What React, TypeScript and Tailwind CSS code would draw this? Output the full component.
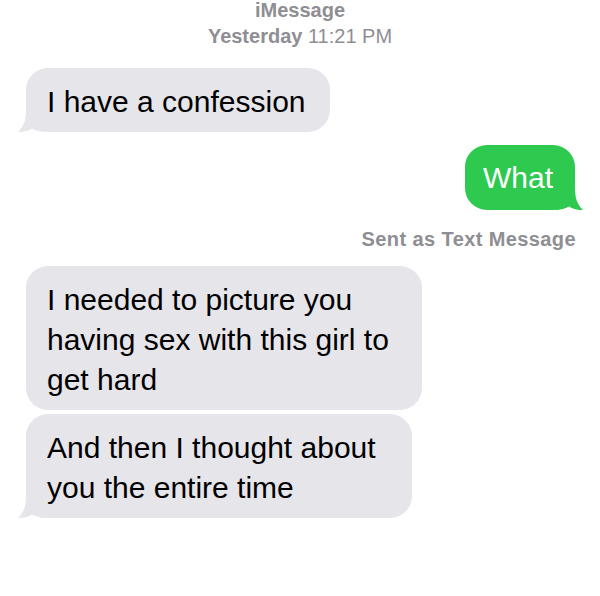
const GRAY = '#e5e5ea'
const GREEN = '#2ec94f'

function Tail({ color, side }: { color: string; side: 'left' | 'right' }) {
  return (
    <svg
      width="28"
      height="22"
      viewBox="0 0 28 22"
      className={side === 'left' ? 'absolute left-[-8px] bottom-0' : 'absolute right-[-8px] bottom-0 -scale-x-100'}
    >
      <path
        d="M8 0 C8 10 6 16 0 22 C6 22.3 11 20.8 14 18.5 C18 20.8 22 21.7 28 22 L28 0 Z"
        fill={color}
      />
    </svg>
  )
}

function Incoming({ lines, w, tail, mt }: { lines: string[]; w: string; tail?: boolean; mt: string }) {
  return (
    <div className={`relative ml-[26px] ${w} ${mt} rounded-[22px] bg-[#e5e5ea] pl-[21px] pt-[14px] pb-[10px] text-[30px] leading-[40px] text-black`}>
      {lines.map((l) => (
        <div key={l} className="whitespace-nowrap">{l}</div>
      ))}
      {tail && <Tail color={GRAY} side="left" />}
    </div>
  )
}

export default function App() {
  return (
    <div className="w-[600px] h-[596px] bg-white overflow-hidden font-['Liberation_Sans',Arial,sans-serif]">
      {/* header */}
      <div className="-mt-[3px] text-center text-[20px] leading-[26px] text-[#8e8e93]">
        <div className="font-bold">iMessage</div>
        <div>
          <span className="font-bold">Yesterday</span> 11:21 PM
        </div>
      </div>

      <Incoming lines={['I have a confession']} w="w-[304px]" tail mt="mt-[19px]" />

      {/* sent */}
      <div className="flex justify-end mt-[13px] pr-[25px]">
        <div className="relative w-[110px] rounded-[22px] bg-[#2ec94f] pl-[18px] pt-[13px] pb-[12px] text-[30px] leading-[40px] text-white">
          What
          <Tail color={GREEN} side="right" />
        </div>
      </div>
      <div className="mt-[17px] pr-[24px] text-right text-[20px] leading-[24px] font-bold tracking-[0.4px] text-[#8e8e93]">
        Sent as Text Message
      </div>

      <Incoming
        lines={['I needed to picture you', 'having sex with this girl to', 'get hard']}
        w="w-[396px]"
        mt="mt-[15px]"
      />
      <Incoming
        lines={['And then I thought about', 'you the entire time']}
        w="w-[386px]"
        tail
        mt="mt-[4px]"
      />
    </div>
  )
}
